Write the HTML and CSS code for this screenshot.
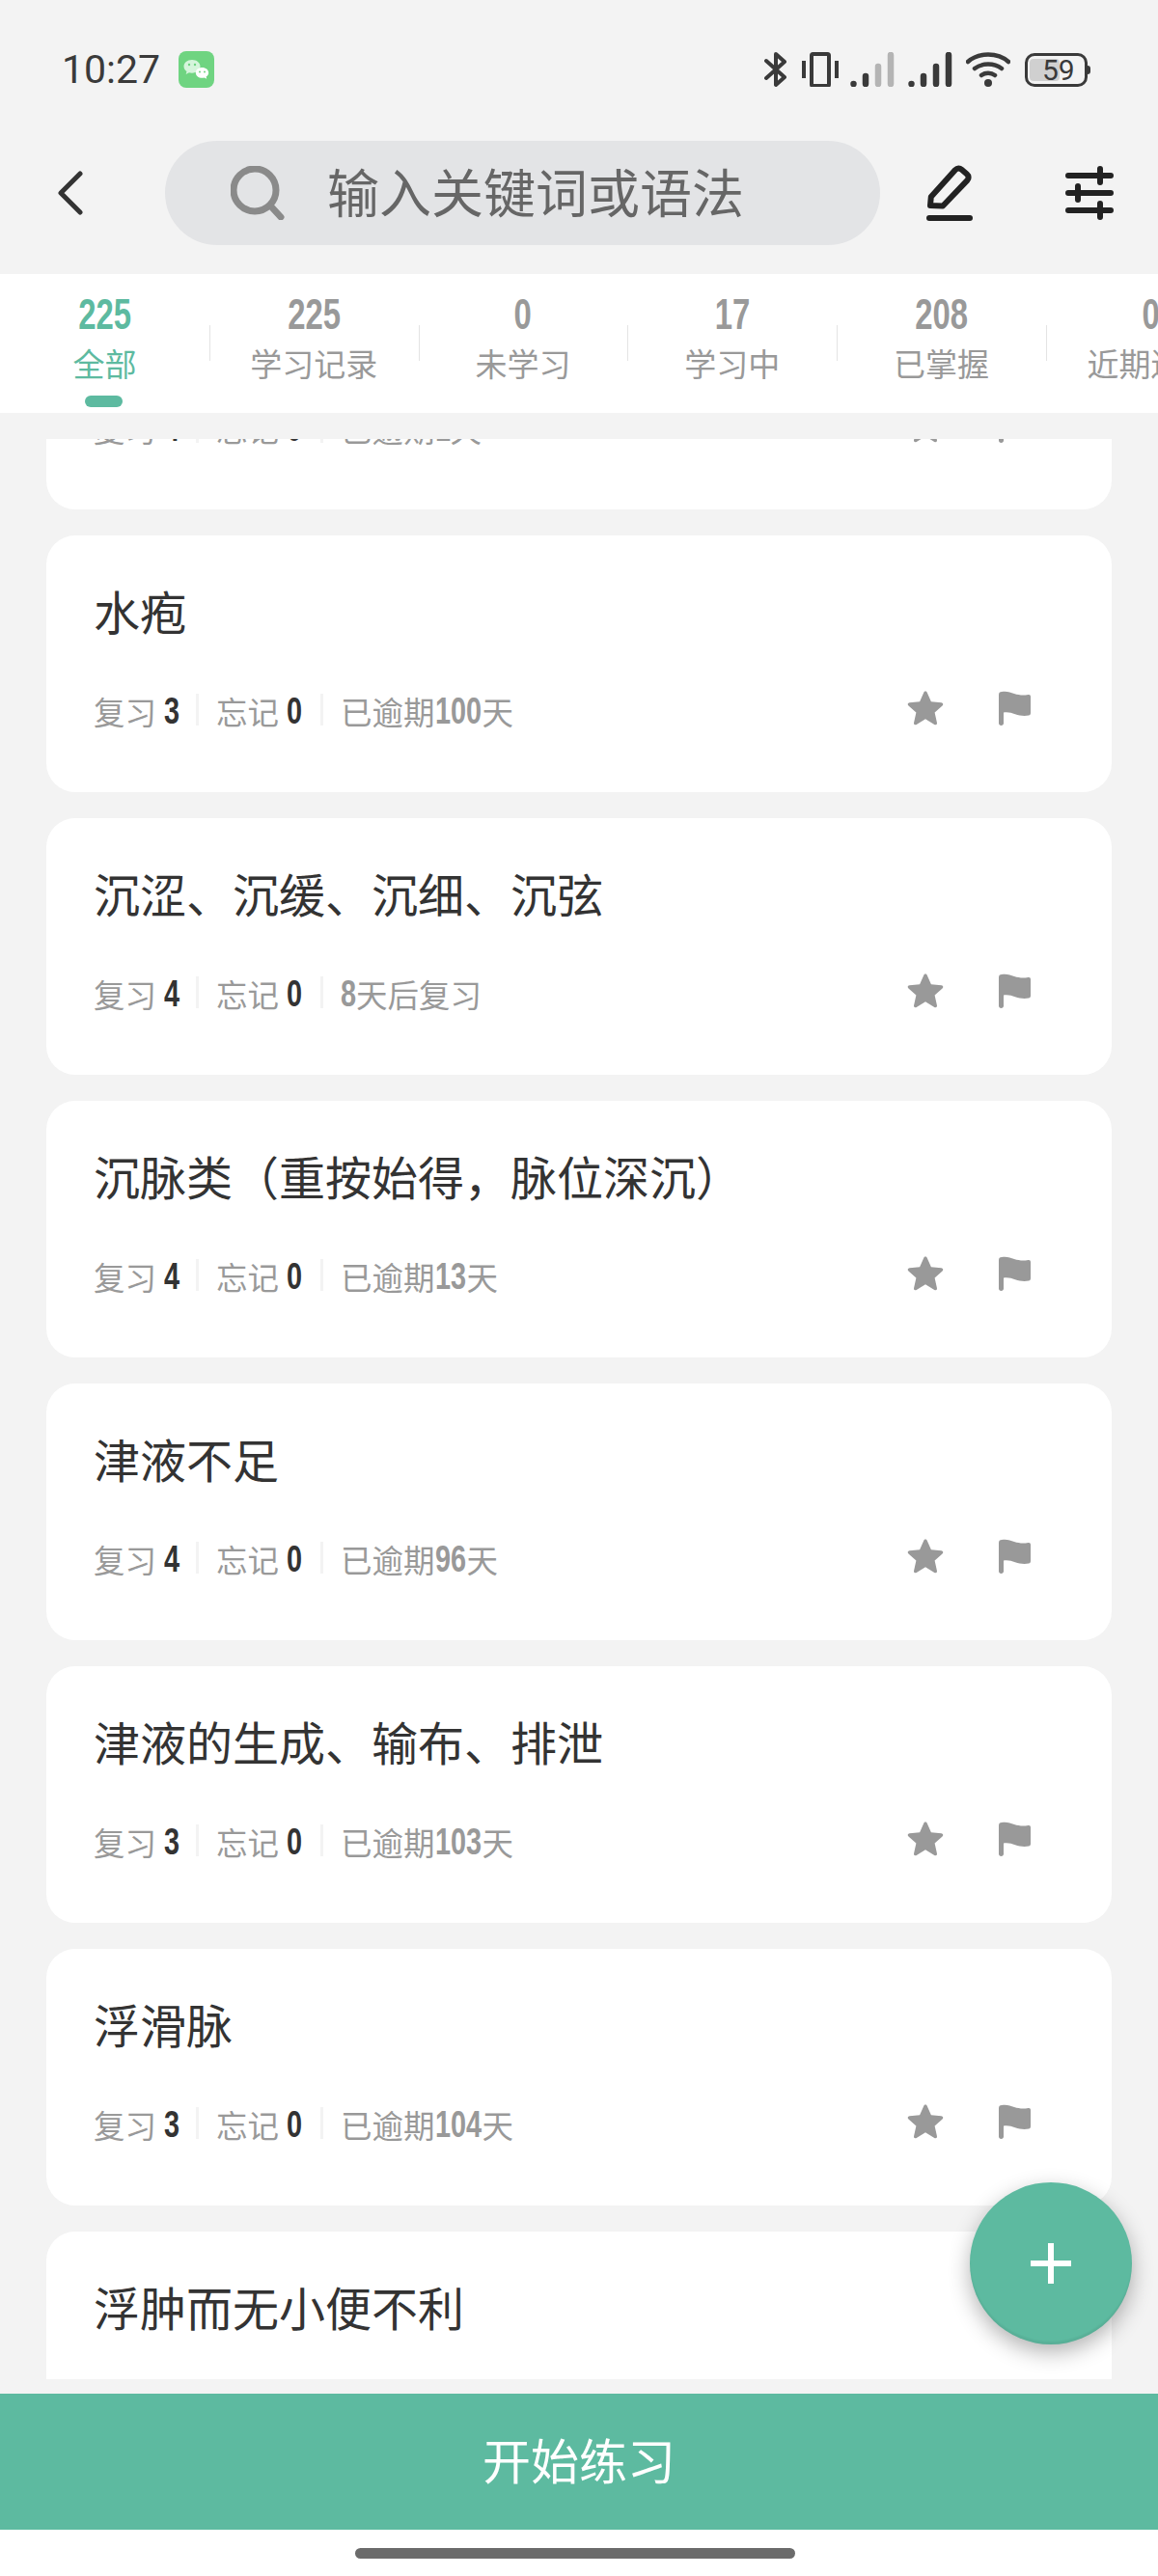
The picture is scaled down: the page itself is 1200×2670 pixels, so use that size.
FILE: index.html
```html
<!DOCTYPE html>
<html lang="zh-CN">
<head>
  <meta charset="UTF-8">
  <title>学习记录</title>
  <link rel="stylesheet" href="styles.css">
</head>
<body>
  <div class="phone">
    <header class="top">
      <div class="status">
        <div class="status-left">
          <span class="time">10:27</span>
          <svg class="wechat" width="37" height="38" viewBox="0 0 37 38">
            <rect width="37" height="38" rx="8" fill="#6fd481"/>
            <path d="M14 9c-5 0-8.500 3-8.500 6.800 0 2.200 1.100 4 3 5.200l-.8 3 3.200-1.700c1 .3 2 .4 3.100.4 4.600 0 8.500-3 8.500-6.900S18.600 9 14 9z" fill="#d6f5dc"/>
            <path d="M24.500 17c-3.800 0-6.700 2.400-6.700 5.400s2.900 5.400 6.700 5.400c.8 0 1.600-.1 2.300-.3l2.400 1.300-.6-2.200c1.600-1 2.500-2.500 2.500-4.200 0-3-2.900-5.400-6.600-5.400z" fill="#fff"/>
            <circle cx="11" cy="14" r="1.200" fill="#6fd481"/>
            <circle cx="17" cy="14" r="1.200" fill="#6fd481"/>
            <circle cx="22" cy="21.500" r="1" fill="#6fd481"/>
            <circle cx="27" cy="21.500" r="1" fill="#6fd481"/>
          </svg>
        </div>
        <div class="status-right">
          <svg class="bt" width="24" height="38" viewBox="0 0 24 38" fill="none" stroke="#3a3a3a" stroke-width="4" stroke-linecap="round" stroke-linejoin="round">
            <path d="M2 10l19 17-9 8V3l9 8L2 28"/>
          </svg>
          <svg class="vib" width="38" height="36" viewBox="0 0 38 36" fill="none" stroke="#3a3a3a" stroke-width="4">
            <rect x="10" y="2" width="18" height="33" rx="1.500"/>
            <path d="M2 9v18M36 9v18"/>
          </svg>
          <svg class="sig" width="46" height="36" viewBox="0 0 46 36" fill="none" stroke-width="6.500" stroke-linecap="round">
            <path d="M3.500 33v.1M16 25v8" stroke="#3a3a3a"/>
            <path d="M29 15v18M42 3v30" stroke="#b4b4b4"/>
          </svg>
          <svg class="sig" width="46" height="36" viewBox="0 0 46 36" fill="none" stroke="#3a3a3a" stroke-width="6.500" stroke-linecap="round">
            <path d="M3.500 33v.1M16 25v8M29 15v18M42 3v30"/>
          </svg>
          <svg class="wifi" width="46" height="36" viewBox="0 0 46 36" fill="none" stroke="#3a3a3a" stroke-width="4.500" stroke-linecap="round">
            <path d="M2 10C13 0 33 0 44 10M9 17c8-6 20-6 28 0M16 24c4-3 10-3 14 0"/>
            <circle cx="23" cy="32" r="4" fill="#3a3a3a" stroke="none"/>
          </svg>
          <div class="battery">
            <div class="battery-fill"></div>
            <span class="battery-num">59</span>
          </div>
        </div>
      </div>
      <div class="searchbar">
        <svg class="back" width="28" height="46" viewBox="0 0 28 46" fill="none" stroke="#333" stroke-width="5" stroke-linecap="round" stroke-linejoin="round">
          <path d="M24 3L4 23l20 20"/>
        </svg>
        <div class="search">
          <svg class="search-icon" width="56" height="56" viewBox="0 0 56 56" fill="none" stroke="#8a8a8a" stroke-width="7" stroke-linecap="round">
            <circle cx="25" cy="25" r="22"/>
            <path d="M41 41l11 12"/>
          </svg>
          <span class="search-hint">输入关键词或语法</span>
        </div>
        <svg class="pen" width="50" height="58" viewBox="0 0 50 58" fill="none" stroke="#222" stroke-width="6" stroke-linecap="round" stroke-linejoin="round">
          <path d="M5 42l.8-9L31 5c2-2 4.500-2 6.500-.3l5.500 4.800c2 1.800 2.200 4.300.4 6.400L18 42.500z"/>
          <path d="M4 55h42"/>
        </svg>
        <svg class="filter" width="50" height="56" viewBox="0 0 50 56" fill="none" stroke="#222" stroke-linecap="round">
          <path d="M3 10h44M3 28h44M3 46h44" stroke-width="6"/>
          <path d="M36 3v14M13 21v14M36 39v14" stroke-width="6"/>
        </svg>
      </div>
    </header>

    <nav class="tabs">
      <div class="tab active"><b class="num">225</b><span class="label">全部</span><i class="tab-bar"></i></div>
      <div class="tab"><b class="num">225</b><span class="label">学习记录</span></div>
      <div class="tab"><b class="num">0</b><span class="label">未学习</span></div>
      <div class="tab"><b class="num">17</b><span class="label">学习中</span></div>
      <div class="tab"><b class="num">208</b><span class="label">已掌握</span></div>
      <div class="tab"><b class="num">0</b><span class="label">近期遗忘</span></div>
    </nav>

    <main class="list">
      <div class="list-inner">
        <article class="card">
          <h3 class="title">水肿</h3>
          <div class="meta">
            <div class="stats"><span class="item">复习 <b class="n d1">4</b></span><span class="item">忘记 <b class="n d1">0</b></span><span class="item due">已逾期<b class="d1">1</b>天</span></div>
            <div class="actions"><svg class="star" viewBox="0 0 36 36"><use href="#i-star"/></svg><svg class="flag" viewBox="0 0 33 36"><use href="#i-flag"/></svg></div>
          </div>
        </article>
        <article class="card">
          <h3 class="title">水疱</h3>
          <div class="meta">
            <div class="stats"><span class="item">复习 <b class="n d1">3</b></span><span class="item">忘记 <b class="n d1">0</b></span><span class="item due">已逾期<b class="d3">100</b>天</span></div>
            <div class="actions"><svg class="star" viewBox="0 0 36 36"><use href="#i-star"/></svg><svg class="flag" viewBox="0 0 33 36"><use href="#i-flag"/></svg></div>
          </div>
        </article>
        <article class="card">
          <h3 class="title">沉涩、沉缓、沉细、沉弦</h3>
          <div class="meta">
            <div class="stats"><span class="item">复习 <b class="n d1">4</b></span><span class="item">忘记 <b class="n d1">0</b></span><span class="item due"><b class="d1">8</b>天后复习</span></div>
            <div class="actions"><svg class="star" viewBox="0 0 36 36"><use href="#i-star"/></svg><svg class="flag" viewBox="0 0 33 36"><use href="#i-flag"/></svg></div>
          </div>
        </article>
        <article class="card">
          <h3 class="title">沉脉类（重按始得，脉位深沉）</h3>
          <div class="meta">
            <div class="stats"><span class="item">复习 <b class="n d1">4</b></span><span class="item">忘记 <b class="n d1">0</b></span><span class="item due">已逾期<b class="d2">13</b>天</span></div>
            <div class="actions"><svg class="star" viewBox="0 0 36 36"><use href="#i-star"/></svg><svg class="flag" viewBox="0 0 33 36"><use href="#i-flag"/></svg></div>
          </div>
        </article>
        <article class="card">
          <h3 class="title">津液不足</h3>
          <div class="meta">
            <div class="stats"><span class="item">复习 <b class="n d1">4</b></span><span class="item">忘记 <b class="n d1">0</b></span><span class="item due">已逾期<b class="d2">96</b>天</span></div>
            <div class="actions"><svg class="star" viewBox="0 0 36 36"><use href="#i-star"/></svg><svg class="flag" viewBox="0 0 33 36"><use href="#i-flag"/></svg></div>
          </div>
        </article>
        <article class="card">
          <h3 class="title">津液的生成、输布、排泄</h3>
          <div class="meta">
            <div class="stats"><span class="item">复习 <b class="n d1">3</b></span><span class="item">忘记 <b class="n d1">0</b></span><span class="item due">已逾期<b class="d3">103</b>天</span></div>
            <div class="actions"><svg class="star" viewBox="0 0 36 36"><use href="#i-star"/></svg><svg class="flag" viewBox="0 0 33 36"><use href="#i-flag"/></svg></div>
          </div>
        </article>
        <article class="card">
          <h3 class="title">浮滑脉</h3>
          <div class="meta">
            <div class="stats"><span class="item">复习 <b class="n d1">3</b></span><span class="item">忘记 <b class="n d1">0</b></span><span class="item due">已逾期<b class="d3">104</b>天</span></div>
            <div class="actions"><svg class="star" viewBox="0 0 36 36"><use href="#i-star"/></svg><svg class="flag" viewBox="0 0 33 36"><use href="#i-flag"/></svg></div>
          </div>
        </article>
        <article class="card">
          <h3 class="title">浮肿而无小便不利</h3>
        </article>
      </div>
    </main>

    <button class="start">开始练习</button>
    <div class="nav-area"><div class="home-bar"></div></div>

    <div class="fab">
      <svg width="42" height="42" viewBox="0 0 42 42"><path d="M18 0h6v18h18v6H24v18h-6V24H0v-6h18z" fill="#fff"/></svg>
    </div>
  </div>

  <svg class="defs" width="0" height="0">
    <symbol id="i-star" viewBox="0 0 36 36">
      <path d="M18 1.500c.8 0 1.300.5 1.700 1.300l3.900 8.800 10 1c1.800.2 2.300 1.800 1 3l-7.500 6.700 2.200 9.900c.4 1.700-1 2.700-2.500 1.800L18 28.700l-8.800 5.300c-1.500.9-2.900-.1-2.500-1.800l2.200-9.900-7.500-6.700c-1.300-1.200-.8-2.800 1-3l10-1 3.900-8.800c.4-.8.900-1.300 1.700-1.300z" fill="#999"/>
    </symbol>
    <symbol id="i-flag" viewBox="0 0 33 36">
      <path d="M0 4c0-2 1-3 3-3 5-1 9 .5 13 2 5 1.500 9 2 14.500 1 1.500-.3 2.500.5 2.500 2v17c0 1.500-.7 2.300-2 2.500-5 .9-9.500.2-14-1.300-4-1.400-7.500-2.400-12-1.700V33.500c0 1.300-1 2.500-2.500 2.500S0 34.800 0 33.500z" fill="#999"/>
    </symbol>
  </svg>
</body>
</html>
```

FILE: styles.css
```css
* { margin: 0; padding: 0; box-sizing: border-box; }
body {
  font-family: "Noto Sans CJK SC", "Noto Sans", sans-serif;
  background-color: #f3f3f3;
  color: #333;
}
.phone {
  position: relative;
  width: 1200px;
  height: 2670px;
  overflow: hidden;
  display: flex;
  flex-direction: column;
}

/* status bar + search row */
.top {
  height: 284px;
  padding-top: 53px;
}
.status {
  height: 38px;
  padding: 0 70px 0 64px;
  display: flex;
  justify-content: space-between;
  align-items: center;
}
.status-left {
  display: flex;
  align-items: center;
  gap: 19px;
}
.time {
  font-family: Roboto, sans-serif;
  font-size: 41px;
  line-height: 38px;
  color: #3a3a3a;
}
.status-right {
  display: flex;
  align-items: center;
}
.bt { margin-right: 15px; }
.vib { margin-right: 12px; }
.sig { margin-right: 14px; }
.wifi { margin-right: 15px; }
.battery {
  position: relative;
  width: 65px;
  height: 35px;
  margin-right: 3px;
  border: 3px solid #3a3a3a;
  border-radius: 10px;
}
.battery::after {
  content: "";
  position: absolute;
  right: -6px;
  top: 10px;
  width: 3px;
  height: 9px;
  background: #3a3a3a;
  border-radius: 0 3px 3px 0;
}
.battery-fill {
  position: absolute;
  left: 2px;
  top: 3px;
  bottom: 3px;
  width: 31px;
  background: #d0d0d0;
  border-radius: 4px;
}
.battery-num {
  position: absolute;
  left: 15px;
  top: 0;
  font-family: Roboto, sans-serif;
  font-size: 30px;
  line-height: 29px;
  color: #3a3a3a;
}
.searchbar {
  height: 108px;
  margin-top: 55px;
  display: flex;
  align-items: center;
}
.back {
  margin-left: 59px;
  margin-right: 84px;
  flex: none;
}
.search {
  width: 741px;
  height: 108px;
  border-radius: 54px;
  background: #e3e4e6;
  display: flex;
  align-items: center;
  padding-left: 68px;
  flex: none;
}
.search-icon { flex: none; }
.search-hint {
  margin-left: 44px;
  padding-bottom: 6px;
  font-size: 54px;
  color: #666;
  white-space: nowrap;
}
.pen {
  margin-left: 47px;
  flex: none;
}
.filter {
  margin-left: 95px;
  flex: none;
}

/* tabs */
.tabs {
  height: 144px;
  background: #fff;
  display: flex;
  overflow: hidden;
  flex: none;
}
.tab {
  position: relative;
  flex: none;
  width: 216.8px;
  display: flex;
  flex-direction: column;
  align-items: center;
  color: #999;
}
.tab + .tab::before {
  content: "";
  position: absolute;
  left: 0;
  top: 53px;
  width: 1px;
  height: 37px;
  background: #e4e4e4;
}
/* no condensed font installed, so the digits get squeezed */
.num {
  display: inline-block;
  font-family: "Liberation Sans", sans-serif;
  font-weight: 700;
  font-size: 45px;
  line-height: 48px;
  margin-top: 18px;
  transform: scaleX(0.73);
}
.label {
  font-size: 33px;
  line-height: 44px;
  margin-top: 4px;
  white-space: nowrap;
}
.tab.active { color: #5dbaa0; }
.tab-bar {
  position: absolute;
  left: 88px;
  top: 126px;
  width: 39px;
  height: 12px;
  border-radius: 6px;
  background: #5dbaa0;
}

/* list */
.list {
  margin: 27px 48px 0;
  height: 2011px;
  overflow: hidden;
  flex: none;
}
.list-inner {
  margin-top: -193px;
  display: flex;
  flex-direction: column;
  gap: 27px;
}
.card {
  height: 266px;
  flex: none;
  background: #fff;
  border-radius: 30px;
  padding: 45px 49px 0;
}
.title {
  font-size: 48px;
  font-weight: 400;
  line-height: 64px;
  color: #333;
  white-space: nowrap;
}
.meta {
  margin-top: 53px;
  height: 40px;
  display: flex;
  justify-content: space-between;
  align-items: center;
}
.stats {
  display: flex;
  align-items: center;
}
.item {
  font-size: 32.5px;
  line-height: 40px;
  color: #999;
  display: flex;
  align-items: center;
  gap: 8px;
  white-space: nowrap;
}
.item + .item {
  margin-left: 17px;
  padding-left: 21px;
  position: relative;
}
.item + .item::before {
  content: "";
  position: absolute;
  left: 0;
  top: 2px;
  width: 3px;
  height: 33px;
  background: #f3f3f3;
}
.item b {
  display: inline-block;
  font-family: "Liberation Sans", sans-serif;
  font-weight: 700;
  font-size: 38px;
  line-height: 40px;
  transform: scaleX(0.76);
  transform-origin: left center;
}
.d1 { width: 16px; }
.d2 { width: 33px; }
.d3 { width: 49px; }
.item .n { color: #333; }
.item.due {
  gap: 0;
  margin-left: 19px;
}
.actions {
  display: flex;
  align-items: center;
  margin-right: 35px;
  margin-top: -6px;
}
.star {
  width: 38px;
  height: 38px;
}
.flag {
  width: 33px;
  height: 36px;
  margin-left: 57px;
}

/* bottom */
.start {
  height: 141px;
  margin-top: 15px;
  padding-bottom: 7px;
  border: none;
  background: #5dbaa0;
  color: #fff;
  font-family: inherit;
  font-size: 50px;
  flex: none;
}
.nav-area {
  flex: 1;
  background: #fff;
  padding-top: 19px;
}
.home-bar {
  width: 456px;
  height: 11px;
  margin-left: 368px;
  border-radius: 6px;
  background: #6b6b6b;
}
.fab {
  position: absolute;
  left: 1005px;
  top: 2262px;
  width: 168px;
  height: 168px;
  border-radius: 50%;
  background: #5dbaa0;
  box-shadow: 0 8px 22px rgba(0, 0, 0, 0.3), inset 0 -3px 2px rgba(0, 0, 0, 0.06);
  display: flex;
  align-items: center;
  justify-content: center;
}
.defs { position: absolute; }
```
